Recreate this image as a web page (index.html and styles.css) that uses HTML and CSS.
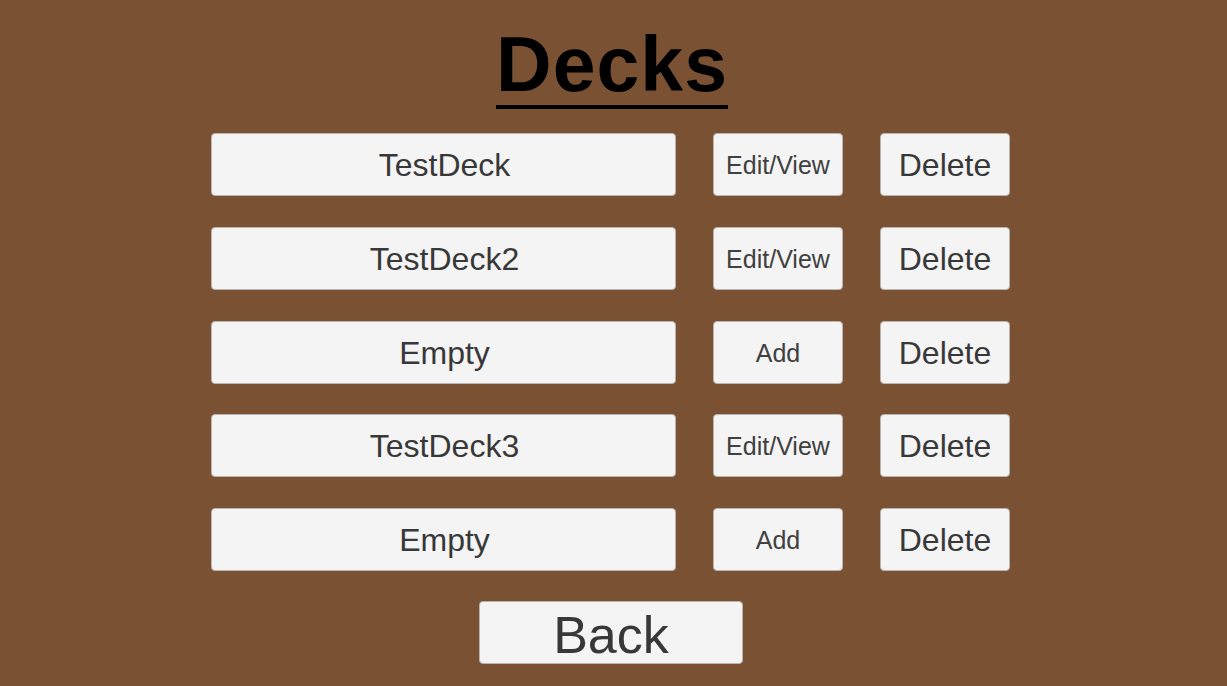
FILE: index.html
```html
<!DOCTYPE html>
<html>
<head>
<meta charset="utf-8">
<link rel="stylesheet" href="styles.css">
</head>
<body>
<div class="page">
  <div class="title-wrap"><h1 class="title">Decks</h1></div>
  <div class="rows">
    <div class="row">
      <div class="btn name">TestDeck</div>
      <div class="btn small">Edit/View</div>
      <div class="btn del">Delete</div>
    </div>
    <div class="row">
      <div class="btn name">TestDeck2</div>
      <div class="btn small">Edit/View</div>
      <div class="btn del">Delete</div>
    </div>
    <div class="row">
      <div class="btn name">Empty</div>
      <div class="btn small">Add</div>
      <div class="btn del">Delete</div>
    </div>
    <div class="row">
      <div class="btn name">TestDeck3</div>
      <div class="btn small">Edit/View</div>
      <div class="btn del">Delete</div>
    </div>
    <div class="row">
      <div class="btn name">Empty</div>
      <div class="btn small">Add</div>
      <div class="btn del">Delete</div>
    </div>
  </div>
  <div class="back-wrap"><div class="btn back">Back</div></div>
</div>
</body>
</html>
```
FILE: styles.css
```css
html, body {
  margin: 0;
  padding: 0;
  background: #7a5133;
  height: 100%;
  overflow: hidden;
}
.page {
  width: 1227px;
  height: 686px;
  font-family: "Liberation Sans", Arial, sans-serif;
}
.title-wrap {
  display: flex;
  justify-content: center;
  padding-top: 26px;
}
.title {
  margin: 0 0 0 -3px;
  font-size: 77px;
  line-height: 77px;
  font-weight: bold;
  color: #000;
  padding-bottom: 2px;
  border-bottom: 4px solid #000;
  letter-spacing: 1px;
}
.rows {
  margin-top: 24px;
  margin-left: 211px;
  display: flex;
  flex-direction: column;
  gap: 30.75px;
}
.row {
  display: flex;
  gap: 37px;
  height: 63px;
}
.btn {
  box-sizing: border-box;
  height: 63px;
  background: #f4f4f4;
  border: 1px solid #b9b4b0;
  border-radius: 4px;
  color: #383838;
  display: flex;
  align-items: center;
  justify-content: center;
  padding-top: 2px;
}
.name {
  width: 465px;
  font-size: 32px;
  padding-left: 2px;
}
.small {
  width: 130px;
  font-size: 25px;
  color: #404040;
}
.del {
  width: 130px;
  font-size: 32px;
}
.back-wrap {
  margin-top: 30px;
  margin-left: 479px;
}
.back {
  width: 264px;
  font-size: 52px;
  padding-top: 4px;
}
```
